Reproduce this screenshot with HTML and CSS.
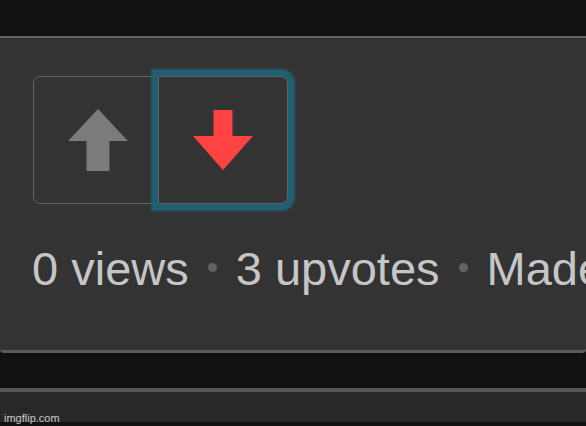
FILE: index.html
```html
<!DOCTYPE html>
<html lang="en">
<head>
    <meta charset="UTF-8">
    <meta name="viewport" content="width=device-width, initial-scale=1.0">
    <title>Votes</title>
    <link rel="stylesheet" href="styles.css">
</head>
<body>

    <div class="topbar"></div>

    <div class="panel">
        <div class="votes">
            <button class="vote up" title="Upvote">
                <svg width="60" height="62" viewBox="0 0 60 62">
                    <polygon points="30,0 60,32 41.5,32 41.5,62 18.5,62 18.5,32 0,32" fill="#7b7b7b"/>
                </svg>
            </button>
            <button class="vote down active" title="Downvote">
                <svg width="60" height="60" viewBox="0 0 60 60">
                    <polygon points="20.5,0 39.5,0 39.5,26 60,26 30,60 0,26 20.5,26" fill="#ff4242"/>
                </svg>
            </button>
        </div>
        <div class="stats">0 views<span class="sep"></span>3 upvotes<span class="sep"></span>Made w/ Imgflip meme maker</div>
    </div>

    <div class="gap"></div>

    <div class="footer">imgflip.com</div>

</body>
</html>
```

FILE: styles.css
```css
body {
    font-family: "Liberation Sans", Arial, sans-serif;
    margin: 0;
    background-color: #111;
    overflow: hidden;
    height: 426px;
}
.topbar {
    height: 36px;
    background-color: #111;
}
.panel {
    background-color: #333;
    border-top: 2px solid #626262;
    border-bottom: 3px solid #5c5c5c;
    border-radius: 0 0 4px 4px;
    padding: 38px 0 54px 33px;
    overflow: hidden;
}
.votes {
    display: flex;
}
.vote {
    width: 126px;
    height: 128px;
    background-color: #333;
    border: 1.5px solid #616161;
    display: flex;
    align-items: center;
    justify-content: center;
    padding: 0;
    cursor: pointer;
}
.vote.up {
    border-radius: 7px 0 0 7px;
    padding-left: 4px;
}
.vote.down {
    margin-left: -1px;
    width: 130px;
    border-radius: 0 7px 7px 0;
}
.vote.active {
    box-shadow: 0 0 2px 7px rgba(30, 100, 120, 0.9);
}
.stats {
    margin-top: 38px;
    margin-left: -1px;
    font-size: 47px;
    line-height: 54px;
    color: #c6c6c6;
    white-space: nowrap;
}
.sep {
    display: inline-block;
    width: 9px;
    height: 9px;
    border-radius: 50%;
    background-color: #626262;
    margin: 0 19px;
    vertical-align: 13px;
}
.gap {
    height: 35px;
    background-color: #111;
}
.footer {
    border-top: 4px solid #575757;
    background-color: #282828;
    height: 34px;
    box-sizing: border-box;
    padding: 20px 0 0 4px;
    font-size: 11px;
    line-height: 12px;
    color: #c8c8c8;
}
```
